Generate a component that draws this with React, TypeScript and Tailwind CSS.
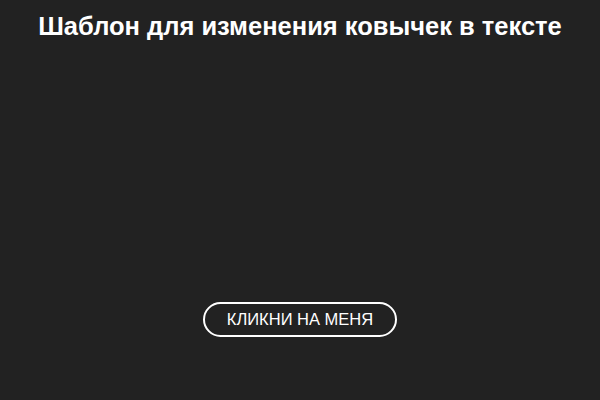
export default function App() {
  return (
    <div className="flex h-[400px] w-[600px] flex-col items-center bg-[#222222] font-['Liberation_Sans',Arial,sans-serif] text-white">
      {/* заголовок */}
      <h1 className="mt-[11px] whitespace-nowrap text-[25.5px] font-bold leading-[30px]">
        Шаблон для изменения ковычек в тексте
      </h1>

      {/* кнопка */}
      <button className="mt-[261px] flex h-[35px] w-[194px] items-center justify-center rounded-full border-2 border-white text-[16.5px] uppercase">
        Кликни на меня
      </button>
    </div>
  );
}
